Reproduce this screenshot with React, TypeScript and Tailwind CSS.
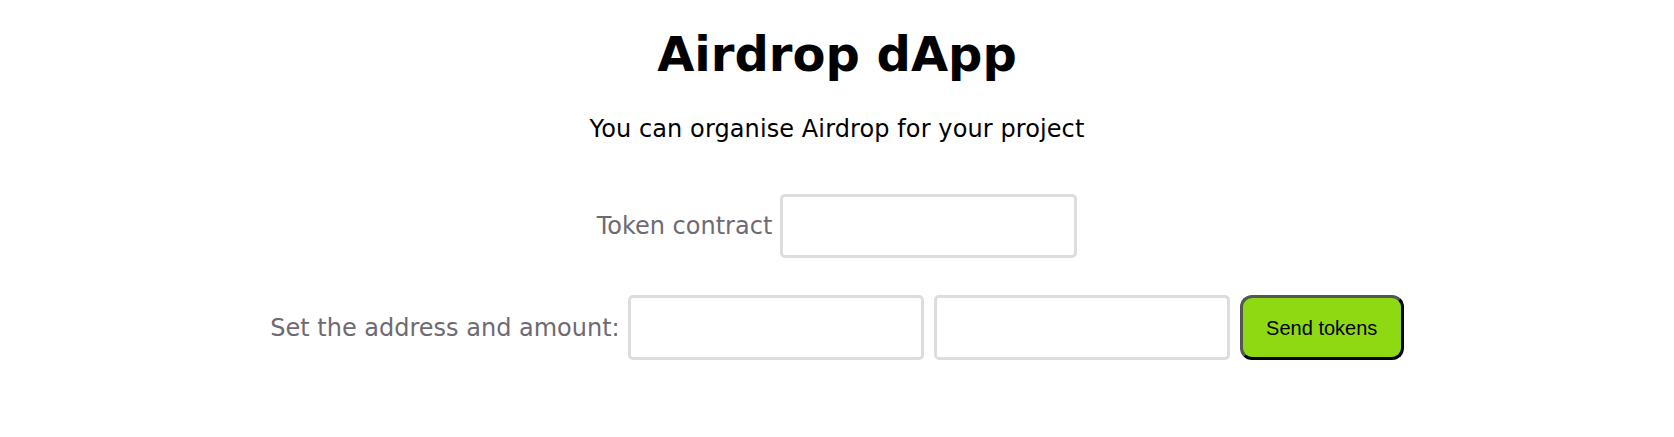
import React from "react";

export default function App() {
  return (
    <div className="min-h-[437px] w-full bg-white flex flex-col items-center pt-[30px] font-['DejaVu_Sans',_Verdana,_sans-serif]">
      <h1 className="text-[48px] leading-[48px] font-bold text-black">Airdrop dApp</h1>
      <p className="mt-[39px] text-[24px] leading-[24px] text-black tracking-[0.1px]">You can organise Airdrop for your project</p>
      <div className="mt-[53px] flex items-center gap-[8px]">
        <label className="text-[24px] leading-[24px] text-[#6e6a72]">Token contract</label>
        <input type="text" className="w-[297px] h-[64px] border-[3px] border-[#dddddd] rounded-[5px] bg-white outline-none" />
      </div>
      <div className="mt-[37px] flex items-center gap-[10px]">
        <label className="text-[24px] leading-[24px] text-[#6e6a72] mr-[-2px]">Set the address and amount:</label>
        <input type="text" className="w-[296px] h-[65px] border-[3px] border-[#dddddd] rounded-[5px] bg-white outline-none" />
        <input type="text" className="w-[296px] h-[65px] border-[3px] border-[#dddddd] rounded-[5px] bg-white outline-none" />
        <button className="w-[164px] h-[65px] border-[3px] border-t-[#555555] border-l-[#555555] border-r-black border-b-black rounded-[12px] bg-[#8ed912] text-black text-[20px] font-['Liberation_Sans',_Arial,_sans-serif]">
          Send tokens
        </button>
      </div>
    </div>
  );
}
